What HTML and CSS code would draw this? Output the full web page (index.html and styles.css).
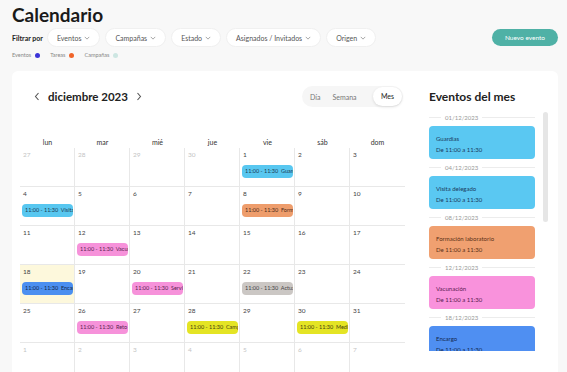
FILE: index.html
```html
<!DOCTYPE html>
<html lang="es">
<head>
<meta charset="utf-8">
<title>Calendario</title>
<link rel="stylesheet" href="styles.css">
</head>
<body>
<div class="page">
  <header class="top">
    <h1 class="title">Calendario</h1>
    <div class="filters">
      <span class="filter-label">Filtrar por</span>
      <button class="pill">Eventos <svg class="chev" viewBox="0 0 8 5"><path d="M1 1l3 3 3-3"/></svg></button>
      <button class="pill">Campañas <svg class="chev" viewBox="0 0 8 5"><path d="M1 1l3 3 3-3"/></svg></button>
      <button class="pill">Estado <svg class="chev" viewBox="0 0 8 5"><path d="M1 1l3 3 3-3"/></svg></button>
      <button class="pill">Asignados / Invitados <svg class="chev" viewBox="0 0 8 5"><path d="M1 1l3 3 3-3"/></svg></button>
      <button class="pill">Origen <svg class="chev" viewBox="0 0 8 5"><path d="M1 1l3 3 3-3"/></svg></button>
      <button class="new-btn">Nuevo evento</button>
    </div>
    <div class="legend">
      <span class="legend-item">Eventos <i class="dot dot-ev"></i></span>
      <span class="legend-item">Tareas <i class="dot dot-ta"></i></span>
      <span class="legend-item">Campañas <i class="dot dot-ca"></i></span>
    </div>
  </header>

  <main class="card">
    <section class="cal">
      <div class="cal-head">
        <div class="month-nav">
          <svg class="arrow" viewBox="0 0 6 9"><path d="M4.5 1L1.5 4.5 4.5 8"/></svg>
          <span class="month">diciembre 2023</span>
          <svg class="arrow" viewBox="0 0 6 9"><path d="M1.5 1l3 3.5-3 3.5"/></svg>
        </div>
        <div class="views">
          <span class="view">Día</span>
          <span class="view">Semana</span>
          <span class="view view-active">Mes</span>
        </div>
      </div>

      <div class="grid">
        <div class="wd">lun</div><div class="wd">mar</div><div class="wd">mié</div><div class="wd">jue</div><div class="wd">vie</div><div class="wd">sáb</div><div class="wd">dom</div>

        <div class="cell"><span class="num out">27</span></div>
        <div class="cell"><span class="num out">28</span></div>
        <div class="cell"><span class="num out">29</span></div>
        <div class="cell"><span class="num out">30</span></div>
        <div class="cell"><span class="num">1</span><div class="ev ev-blue">11:00 - 11:30&nbsp; Guardias</div></div>
        <div class="cell"><span class="num">2</span></div>
        <div class="cell last"><span class="num">3</span></div>

        <div class="cell"><span class="num">4</span><div class="ev ev-blue">11:00 - 11:30&nbsp; Visita delegado</div></div>
        <div class="cell"><span class="num">5</span></div>
        <div class="cell"><span class="num">6</span></div>
        <div class="cell"><span class="num">7</span></div>
        <div class="cell"><span class="num">8</span><div class="ev ev-orange">11:00 - 11:30&nbsp; Formación laboratorio</div></div>
        <div class="cell"><span class="num">9</span></div>
        <div class="cell last"><span class="num">10</span></div>

        <div class="cell"><span class="num">11</span></div>
        <div class="cell"><span class="num">12</span><div class="ev ev-pink">11:00 - 11:30&nbsp; Vacunación</div></div>
        <div class="cell"><span class="num">13</span></div>
        <div class="cell"><span class="num">14</span></div>
        <div class="cell"><span class="num">15</span></div>
        <div class="cell"><span class="num">16</span></div>
        <div class="cell last"><span class="num">17</span></div>

        <div class="cell today"><span class="num">18</span><div class="ev ev-dblue">11:00 - 11:30&nbsp; Encargo</div></div>
        <div class="cell"><span class="num">19</span></div>
        <div class="cell"><span class="num">20</span><div class="ev ev-pink">11:00 - 11:30&nbsp; Servicio</div></div>
        <div class="cell"><span class="num">21</span></div>
        <div class="cell"><span class="num">22</span><div class="ev ev-gray">11:00 - 11:30&nbsp; Actualización</div></div>
        <div class="cell"><span class="num">23</span></div>
        <div class="cell last"><span class="num">24</span></div>

        <div class="cell"><span class="num">25</span></div>
        <div class="cell"><span class="num">26</span><div class="ev ev-pink">11:00 - 11:30&nbsp; Reto mensual</div></div>
        <div class="cell"><span class="num">27</span></div>
        <div class="cell"><span class="num">28</span><div class="ev ev-yellow">11:00 - 11:30&nbsp; Campaña</div></div>
        <div class="cell"><span class="num">29</span></div>
        <div class="cell"><span class="num">30</span><div class="ev ev-yellow">11:00 - 11:30&nbsp; Medicación</div></div>
        <div class="cell last"><span class="num">31</span></div>

        <div class="cell"><span class="num out">1</span></div>
        <div class="cell"><span class="num out">2</span></div>
        <div class="cell"><span class="num out">3</span></div>
        <div class="cell"><span class="num out">4</span></div>
        <div class="cell"><span class="num out">5</span></div>
        <div class="cell"><span class="num out">6</span></div>
        <div class="cell last"><span class="num out">7</span></div>
      </div>
    </section>

    <aside class="side">
      <h2 class="side-title">Eventos del mes</h2>
      <div class="list-wrap">
        <div class="list">
          <div class="sep"><span>01/12/2023</span></div>
          <div class="item it-blue"><div class="it-name">Guardias</div><div class="it-time">De 11:00 a 11:30</div></div>
          <div class="sep"><span>04/12/2023</span></div>
          <div class="item it-blue"><div class="it-name">Visita delegado</div><div class="it-time">De 11:00 a 11:30</div></div>
          <div class="sep"><span>08/12/2023</span></div>
          <div class="item it-orange"><div class="it-name">Formación laboratorio</div><div class="it-time">De 11:00 a 11:30</div></div>
          <div class="sep"><span>12/12/2023</span></div>
          <div class="item it-pink"><div class="it-name">Vacunación</div><div class="it-time">De 11:00 a 11:30</div></div>
          <div class="sep"><span>18/12/2023</span></div>
          <div class="item it-dblue"><div class="it-name">Encargo</div><div class="it-time">De 11:00 a 11:30</div></div>
        </div>
        <div class="scrollbar"></div>
      </div>
    </aside>
  </main>
</div>
</body>
</html>
```

FILE: styles.css
```css
* { box-sizing: border-box; }
html, body { margin: 0; padding: 0; }
body {
  background: #f8f8f8;
  font-family: "Lato", "Inter", sans-serif;
  color: #222;
  width: 567px;
  height: 372px;
  overflow: hidden;
}
.page { padding: 4px 9px 0 12px; }

.title {
  margin: 0;
  font-size: 19px;
  line-height: 22px;
  font-weight: 700;
  color: #1a1a1a;
}

.filters {
  display: flex;
  align-items: center;
  margin-top: 2px;
  height: 19px;
}
.filter-label {
  font-size: 7px;
  font-weight: 700;
  color: #222;
  margin-right: 4px;
}
.pill {
  display: flex;
  align-items: center;
  gap: 3px;
  height: 19px;
  padding: 0 9px;
  margin-right: 5px;
  border: 1px solid #f0f0f0;
  border-radius: 10px;
  background: #fff;
  font-family: inherit;
  font-size: 7px;
  color: #555;
}
.chev { width: 6px; height: 4px; fill: none; stroke: #888; stroke-width: 1; }
.new-btn {
  margin-left: auto;
  height: 17px;
  width: 66px;
  border: 0;
  border-radius: 9px;
  background: #4fb1a6;
  color: #fff;
  font-family: inherit;
  font-size: 6.5px;
  padding: 0;
}

.legend {
  display: flex;
  gap: 10px;
  margin-top: 2px;
  height: 12px;
  align-items: center;
}
.legend-item {
  display: flex;
  align-items: center;
  gap: 4px;
  font-size: 5.5px;
  color: #888;
}
.dot { width: 5px; height: 5px; border-radius: 50%; display: inline-block; }
.dot-ev { background: #3b34d8; }
.dot-ta { background: #f0642a; }
.dot-ca { background: #cde6e2; }

.card {
  margin-top: 10px;
  background: #fff;
  border-radius: 6px 6px 0 0;
  display: flex;
  padding: 15px 10px 0 8px;
  height: 301px;
  overflow: hidden;
}
.cal { width: 385px; }
.cal-head {
  display: flex;
  align-items: center;
  justify-content: space-between;
  height: 21px;
}
.month-nav {
  display: flex;
  align-items: center;
  gap: 6px;
  margin-left: 14px;
}
.arrow { width: 6px; height: 9px; fill: none; stroke: #555; stroke-width: 1.1; }
.month {
  font-size: 11.5px;
  font-weight: 700;
  color: #222;
  margin: 0 2px;
}
.views {
  display: flex;
  align-items: center;
  height: 21px;
  width: 101px;
  background: #f6f6f6;
  border-radius: 11px;
  padding: 0 1px 0 8px;
  margin-right: 2px;
}
.view {
  font-size: 7px;
  color: #777;
  padding: 0 6px;
}
.view:first-child { padding-left: 0; }
.view-active {
  margin-left: auto;
  background: #fff;
  border-radius: 10px;
  height: 19px;
  line-height: 19px;
  padding: 0 8px;
  color: #222;
  box-shadow: 0 1px 3px rgba(0,0,0,0.12);
}

.grid {
  display: grid;
  grid-template-columns: repeat(7, 55px);
  grid-template-rows: 12px repeat(6, 39px);
  margin-top: 29px;
}
.wd {
  text-align: center;
  font-size: 7px;
  color: #333;
  line-height: 12px;
}
.cell {
  border-right: 1px solid #e8e8e8;
  border-bottom: 1px solid #e8e8e8;
  padding: 3px 1px 0 2px;
  overflow: hidden;
}
.cell.last { border-right: 0; }
.cell.today { background: #fdf8dc; }
.num {
  display: block;
  font-size: 6.5px;
  line-height: 8px;
  color: #444;
  padding-left: 1px;
}
.num.out { color: #c4c4c4; }
.ev {
  margin-top: 6px;
  height: 13px;
  line-height: 13px;
  border-radius: 4px;
  padding-left: 3px;
  font-size: 5.5px;
  white-space: nowrap;
  overflow: hidden;
  color: #333;
}
.ev-blue { background: #58c7f0; color: #1d3b52; }
.ev-dblue { background: #4b8ff0; color: #13284a; }
.ev-orange { background: #ee9d6c; color: #4a2a18; }
.ev-pink { background: #f692da; color: #5a2450; }
.ev-gray { background: #cbc7c4; color: #444; }
.ev-yellow { background: #e4e424; color: #444010; }

.side {
  margin-left: 24px;
  width: 120px;
}
.side-title {
  margin: 0;
  font-size: 12px;
  line-height: 21px;
  font-weight: 700;
  color: #222;
}
.list-wrap {
  display: flex;
  margin-top: 2px;
  height: 242px;
  overflow: hidden;
}
.list { width: 106px; }
.scrollbar {
  margin-left: 8px;
  margin-top: 3px;
  width: 5px;
  height: 110px;
  background: #e6e6e6;
  border-radius: 3px;
}
.sep {
  height: 17px;
  display: flex;
  align-items: center;
  position: relative;
}
.sep::before {
  content: "";
  position: absolute;
  left: 0; right: 0; top: 8px;
  border-top: 1px solid #ececec;
}
.sep span {
  position: relative;
  background: #fff;
  margin-left: 12px;
  padding: 0 4px;
  font-size: 6px;
  color: #999;
}
.item {
  height: 33px;
  border-radius: 4px;
  padding: 7px 7px 0;
  font-size: 6px;
  line-height: 11px;
}
.it-name, .it-time { white-space: nowrap; }
.it-blue { background: #5ac8f2; color: #1a3a60; }
.it-dblue { background: #4f8ff2; color: #14284e; }
.it-orange { background: #f0a070; color: #5a3018; }
.it-pink { background: #f992dc; color: #5a2050; }
```
